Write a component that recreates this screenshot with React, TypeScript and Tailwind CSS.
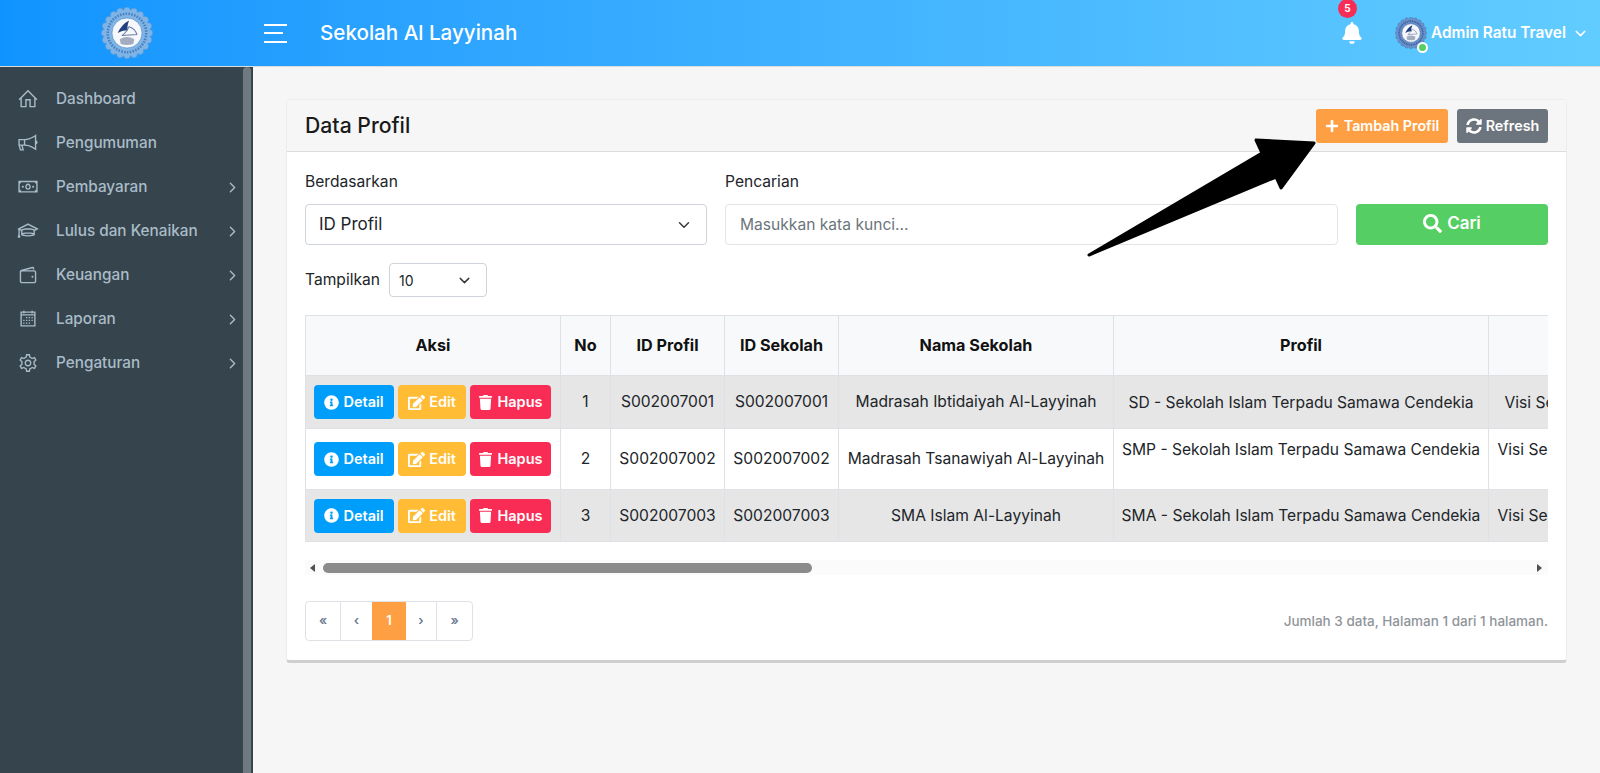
import React from "react";
import {
  LiaHomeSolid,
  LiaBullhornSolid,
  LiaMoneyBillSolid,
  LiaGraduationCapSolid,
  LiaWalletSolid,
  LiaCalendarAltSolid,
  LiaCogSolid,
} from "react-icons/lia";
import {
  FaInfoCircle,
  FaEdit,
  FaTrash,
  FaSearch,
  FaSyncAlt,
  FaPlus,
  FaBell,
} from "react-icons/fa";
import { FiChevronDown, FiChevronRight } from "react-icons/fi";

const menu = [
  { label: "Dashboard", icon: LiaHomeSolid, arrow: false },
  { label: "Pengumuman", icon: LiaBullhornSolid, arrow: false },
  { label: "Pembayaran", icon: LiaMoneyBillSolid, arrow: true },
  { label: "Lulus dan Kenaikan", icon: LiaGraduationCapSolid, arrow: true },
  { label: "Keuangan", icon: LiaWalletSolid, arrow: true },
  { label: "Laporan", icon: LiaCalendarAltSolid, arrow: true },
  { label: "Pengaturan", icon: LiaCogSolid, arrow: true },
];

const rows = [
  {
    no: 1,
    id: "S002007001",
    nama: "Madrasah Ibtidaiyah Al-Layyinah",
    profil: "SD - Sekolah Islam Terpadu Samawa Cendekia",
    visi: "Visi Sekolah Islam Terpadu Samawa Cendekia",
  },
  {
    no: 2,
    id: "S002007002",
    nama: "Madrasah Tsanawiyah Al-Layyinah",
    profil: "SMP - Sekolah Islam Terpadu Samawa Cendekia",
    visi: "Visi Sekolah Islam Terpadu Samawa Cendekia",
  },
  {
    no: 3,
    id: "S002007003",
    nama: "SMA Islam Al-Layyinah",
    profil: "SMA - Sekolah Islam Terpadu Samawa Cendekia",
    visi: "Visi Sekolah Islam Terpadu Samawa Cendekia",
  },
];

const Seal: React.FC<{ size: number; ring: string; edge: string; ink: string }> = ({
  size,
  ring,
  edge,
  ink,
}) => (
  <svg width={size} height={size} viewBox="0 0 100 100">
    {Array.from({ length: 20 }).map((_, i) => {
      const a = (i / 20) * Math.PI * 2;
      return (
        <circle
          key={i}
          cx={50 + 43 * Math.cos(a)}
          cy={50 + 43 * Math.sin(a)}
          r="6.5"
          fill={ring}
          stroke={edge}
          strokeWidth="1"
        />
      );
    })}
    <circle cx="50" cy="50" r="44" fill={ring} />
    <circle
      cx="50"
      cy="50"
      r="37"
      fill="none"
      stroke={ink}
      strokeWidth="5"
      strokeDasharray="3 2.5"
    />
    <circle cx="50" cy="50" r="29" fill="#f6f8fb" stroke={edge} strokeWidth="1.5" />
    <path d="M32 50 Q40 33 54 26 Q49 38 52 45 Q42 44 32 50Z" fill="#22407f" />
    <path d="M54 38 Q66 42 69 53 L40 55 Q48 50 54 38Z" fill="none" stroke="#6b7fa8" strokeWidth="2" />
    <path d="M36 62 Q50 53 64 62 L62 71 Q50 75 38 71Z" fill="#a3adbf" />
  </svg>
);

const ActionButton: React.FC<{
  icon: React.ReactNode;
  label: string;
  className: string;
}> = ({ icon, label, className }) => (
  <button
    className={`flex h-[34px] items-center justify-center gap-[4px] rounded-[4px] text-[14.5px] font-semibold text-white ${className}`}
  >
    {icon}
    {label}
  </button>
);

const App: React.FC = () => {
  return (
    <div className="relative flex h-[773px] w-[1600px] flex-col overflow-hidden bg-[#f6f6f6] font-['Inter',sans-serif] text-[15.6px] text-[#212529]">
      {/* header */}
      <header className="flex h-[67px] shrink-0 items-center border-b border-[#dcdcdc] bg-gradient-to-r from-[#0f94ff] to-[#61ccff] text-white">
        <div className="flex w-[253px] shrink-0 justify-center">
          <Seal size={52} ring="#7fb5e6" edge="#5c93cf" ink="#4a7fbd" />
        </div>
        <div className="ml-[11px] flex w-[23px] flex-col gap-[6.5px]">
          <span className="h-[2px] w-[23px] bg-white" />
          <span className="h-[2px] w-[19px] bg-white" />
          <span className="h-[2px] w-[23px] bg-white" />
        </div>
        <div className="ml-[33px] text-[20.6px] font-medium">Sekolah Al Layyinah</div>
        <div className="ml-auto flex items-center">
          <div className="relative mr-[32px]">
            <FaBell size={22} />
            <span className="absolute -top-[23px] -left-[3px] flex h-[19px] w-[19px] items-center justify-center rounded-full bg-[#f82c55] text-[10px] font-bold">
              5
            </span>
          </div>
          <div className="relative">
            <Seal size={32} ring="#6b8fc7" edge="#3f69a8" ink="#2f5a9e" />
            <span className="absolute -right-[1px] -bottom-[4px] h-[11px] w-[11px] rounded-full border-2 border-white bg-[#55ce63]" />
          </div>
          <div className="ml-[4px] text-[15.4px] font-semibold">Admin Ratu Travel</div>
          <FiChevronDown size={17} className="mr-[11px] ml-[6px]" />
        </div>
      </header>

      <div className="flex min-h-0 flex-1">
        {/* sidebar */}
        <aside className="flex w-[253px] shrink-0 bg-[#36444e]">
          <nav className="w-[243px] pt-[10px] text-[#a9bcc7]">
            {menu.map((item) => (
              <div key={item.label} className="flex h-[44px] items-center pr-[2px] pl-[17px]">
                <item.icon size={22} />
                <span className="ml-[17px] text-[15.3px] font-medium">{item.label}</span>
                {item.arrow && <FiChevronRight size={17} className="ml-auto" />}
              </div>
            ))}
          </nav>
          <div className="w-[8px] rounded-t-[4px] bg-[#6f7a80]" />
        </aside>

        {/* content */}
        <main className="min-w-0 flex-1 px-[33px] pt-[32px]">
          <div className="rounded-[4px] border border-b-[3px] border-[#ececec] border-b-[#cfcfcf] bg-white">
            <div className="flex h-[52px] items-center rounded-t-[4px] border-b border-[#dcdcdc] bg-[#f6f6f6] px-[18px]">
              <h1 className="text-[21.2px] font-medium text-[#1a1a1a]">Data Profil</h1>
              <div className="ml-auto flex gap-[9px]">
                <button className="flex h-[34px] w-[132px] items-center justify-center gap-[5px] rounded-[3px] bg-[#ff9f43] text-[14.3px] font-semibold text-white">
                  <FaPlus size={14} />
                  Tambah Profil
                </button>
                <button className="flex h-[34px] w-[91px] items-center justify-center gap-[4px] rounded-[3px] bg-[#6c757d] text-[14.3px] font-semibold text-white">
                  <FaSyncAlt size={16} />
                  Refresh
                </button>
              </div>
            </div>

            <div className="px-[18px] pt-[18px] pb-[19px]">
              <div className="flex items-end gap-[18px]">
                <div className="w-[402px]">
                  <label className="mb-[10px] block leading-[24px]">Berdasarkan</label>
                  <div className="flex h-[41px] items-center justify-between rounded-[4px] border border-[#ced4da] px-[13px] text-[17px]">
                    ID Profil
                    <FiChevronDown size={18} className="text-[#343a40]" />
                  </div>
                </div>
                <div className="w-[613px]">
                  <label className="mb-[10px] block leading-[24px]">Pencarian</label>
                  <div className="flex h-[41px] items-center rounded-[4px] border border-[#e4e4e4] px-[14px] text-[#6c757d]">
                    Masukkan kata kunci...
                  </div>
                </div>
                <button className="flex h-[41px] w-[192px] items-center justify-center gap-[5px] rounded-[4px] bg-[#55ce63] pb-[2px] text-[17px] font-semibold text-white">
                  <FaSearch size={19} />
                  Cari
                </button>
              </div>

              <div className="mt-[18px] flex items-center gap-[9px]">
                <span>Tampilkan</span>
                <div className="flex h-[34px] w-[98px] items-center justify-between rounded-[4px] border border-[#ced4da] pr-[13px] pl-[9px] text-[14px]">
                  10
                  <FiChevronDown size={17} className="text-[#343a40]" />
                </div>
              </div>

              <div className="mt-[18px] overflow-hidden">
                <table className="w-[1600px] table-fixed border-collapse text-center">
                  <colgroup>
                    <col className="w-[255px]" />
                    <col className="w-[50px]" />
                    <col className="w-[114px]" />
                    <col className="w-[114px]" />
                    <col className="w-[275px]" />
                    <col className="w-[375px]" />
                    <col className="w-[417px]" />
                  </colgroup>
                  <thead>
                    <tr className="h-[60px] bg-[#f8f9fa] text-[16.2px] text-[#111]">
                      {["Aksi", "No", "ID Profil", "ID Sekolah", "Nama Sekolah", "Profil", "Visi"].map((h) => (
                        <th key={h} className="border border-[#dee2e6] font-bold">
                          {h}
                        </th>
                      ))}
                    </tr>
                  </thead>
                  <tbody>
                    {rows.map((r) => (
                      <tr
                        key={r.no}
                        className={
                          r.no === 2
                            ? "h-[61px] bg-white"
                            : r.no === 1
                              ? "h-[53px] bg-[#e6e6e6]"
                              : "h-[52px] bg-[#e6e6e6]"
                        }
                      >
                        <td className="border border-[#dee2e6] px-[8px]">
                          <div className="flex gap-[4px]">
                            <ActionButton
                              icon={<FaInfoCircle size={15} />}
                              label="Detail"
                              className="w-[80px] bg-[#009efb]"
                            />
                            <ActionButton
                              icon={<FaEdit size={17} />}
                              label="Edit"
                              className="w-[68px] bg-[#ffbc34]"
                            />
                            <ActionButton
                              icon={<FaTrash size={15} />}
                              label="Hapus"
                              className="w-[81px] bg-[#f82c55]"
                            />
                          </div>
                        </td>
                        <td className="border border-[#dee2e6]">{r.no}</td>
                        <td className="border border-[#dee2e6]">{r.id}</td>
                        <td className="border border-[#dee2e6]">{r.id}</td>
                        <td className="border border-[#dee2e6] whitespace-nowrap">{r.nama}</td>
                        <td className="border border-[#dee2e6] leading-[19px] whitespace-nowrap">
                          {r.profil}
                          {r.no === 2 && (
                            <>
                              <br />
                              &nbsp;
                            </>
                          )}
                        </td>
                        <td
                          className={
                            r.no === 1
                              ? "border border-[#dee2e6] pr-[46px] leading-[19px] whitespace-nowrap"
                              : "border border-[#dee2e6] pr-[60px] leading-[19px] whitespace-nowrap"
                          }
                        >
                          {r.visi}
                          {r.no === 2 && (
                            <>
                              <br />
                              &nbsp;
                            </>
                          )}
                        </td>
                      </tr>
                    ))}
                  </tbody>
                </table>
              </div>

              {/* horizontal scrollbar */}
              <div className="mt-[18px] flex h-[15px] items-center bg-[#fbfbfb] pr-[6px] pl-[5px]">
                <span className="h-0 w-0 border-y-[4px] border-r-[5px] border-y-transparent border-r-[#505050]" />
                <div className="ml-[8px] h-[10px] w-[489px] rounded-[5px] bg-[#8b8b8b]" />
                <span className="ml-auto h-0 w-0 border-y-[4px] border-l-[5px] border-y-transparent border-l-[#505050]" />
              </div>

              <div className="mt-[26px] flex items-center justify-between">
                <div className="flex h-[40px] rounded-[4px] border border-[#dee2e6] text-[13px] font-semibold text-[#6c7a91]">
                  <span className="flex w-[35px] items-center justify-center border-r border-[#dee2e6]">«</span>
                  <span className="flex w-[31px] items-center justify-center">‹</span>
                  <span className="flex w-[34px] items-center justify-center bg-[#ff9f43] text-white">1</span>
                  <span className="flex w-[31px] items-center justify-center border-r border-[#dee2e6]">›</span>
                  <span className="flex w-[35px] items-center justify-center">»</span>
                </div>
                <span className="text-[13.5px] font-medium text-[#8f959a]">
                  Jumlah 3 data, Halaman 1 dari 1 halaman.
                </span>
              </div>
            </div>
          </div>
        </main>
      </div>

      {/* annotation arrow lying over the page */}
      <svg className="pointer-events-none absolute top-0 left-0" width="1600" height="773">
        <polygon
          points="1314,143 1256,140 1262,153 1089,255 1276,177 1281,188"
          fill="#000"
          stroke="#000"
          strokeWidth="3"
          strokeLinejoin="round"
        />
      </svg>
    </div>
  );
};

export default App;
